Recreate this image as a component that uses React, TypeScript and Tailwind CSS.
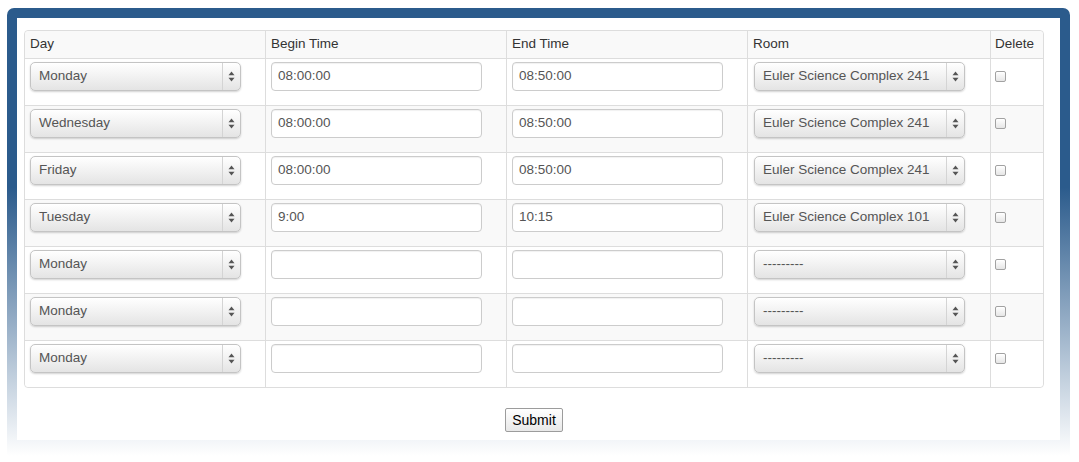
import React from "react";

type Row = { day: string; begin: string; end: string; room: string; gray: boolean };

const rows: Row[] = [
  { day: "Monday", begin: "08:00:00", end: "08:50:00", room: "Euler Science Complex 241", gray: false },
  { day: "Wednesday", begin: "08:00:00", end: "08:50:00", room: "Euler Science Complex 241", gray: true },
  { day: "Friday", begin: "08:00:00", end: "08:50:00", room: "Euler Science Complex 241", gray: false },
  { day: "Tuesday", begin: "9:00", end: "10:15", room: "Euler Science Complex 101", gray: true },
  { day: "Monday", begin: "", end: "", room: "---------", gray: false },
  { day: "Monday", begin: "", end: "", room: "---------", gray: true },
  { day: "Monday", begin: "", end: "", room: "---------", gray: false },
];

function Arrows() {
  return (
    <svg width="7" height="11" viewBox="0 0 7 11" className="block">
      <path d="M3.5 0.5 L6.5 4.2 L0.5 4.2 Z" fill="#555" />
      <path d="M3.5 10.5 L6.5 6.8 L0.5 6.8 Z" fill="#555" />
    </svg>
  );
}

function FakeSelect({ value }: { value: string }) {
  return (
    <div className="flex h-[29px] w-[211px] items-stretch rounded-[5px] border border-[#c4c4c4] bg-[linear-gradient(to_bottom,#ffffff_0%,#f3f3f3_45%,#e4e4e4_100%)] shadow-[0_1px_2px_rgba(0,0,0,0.18),inset_0_1px_0_#fff]">
      <div className="flex flex-1 items-center pl-[8px] text-[13.5px] text-[#555]">{value}</div>
      <div className="flex w-[18px] items-center justify-center border-l border-[#d4d4d4]">
        <Arrows />
      </div>
    </div>
  );
}

function FakeInput({ value }: { value: string }) {
  return (
    <div className="flex h-[29px] w-[211px] items-center rounded-[4px] border border-[#cccccc] bg-white pl-[6px] text-[13.5px] text-[#555] shadow-[inset_0_1px_1px_rgba(0,0,0,0.06)]">
      {value}
    </div>
  );
}

function Check() {
  return (
    <div className="h-[11px] w-[11px] rounded-[2px] border border-[#a2a2a2] bg-[linear-gradient(to_bottom,#ffffff,#e6e6e6)] shadow-[inset_0_1px_0_#fff]" />
  );
}

export default function App() {
  const font = { fontFamily: '"Liberation Sans", Arial, sans-serif' };
  return (
    <div className="h-[462px] w-[1079px] bg-white pl-[7px] pt-[8px]" style={font}>
      <div className="h-[448px] w-[1063px] rounded-t-[7px] bg-[linear-gradient(to_bottom,#2b5b8c_0%,#2b5b8c_40%,#ffffff_100%)] px-[10px] pt-[10px]">
        <div className="h-[422px] bg-white pl-[7px] pt-[12px]">
          <div className="flex w-[1020px] flex-col items-center">
            <div className="w-[1020px] rounded-[4px] border border-[#dddddd]">
              <div className="grid grid-cols-[240px_241px_241px_243px_53px] rounded-t-[4px] bg-[#f9f9f9] text-[13.5px] text-[#333]">
                <div className="flex h-[27px] items-center pl-[5px]">Day</div>
                <div className="flex h-[27px] items-center border-l border-[#dddddd] pl-[5px]">Begin Time</div>
                <div className="flex h-[27px] items-center border-l border-[#dddddd] pl-[5px]">End Time</div>
                <div className="flex h-[27px] items-center border-l border-[#dddddd] pl-[5px]">Room</div>
                <div className="flex h-[27px] items-center border-l border-[#dddddd] pl-[4px]">Delete</div>
              </div>
              {rows.map((r, i) => (
                <div
                  key={i}
                  className={
                    "grid grid-cols-[240px_241px_241px_243px_53px] border-t border-[#dddddd] " +
                    (r.gray ? "bg-[#f9f9f9]" : "bg-white") +
                    (i === rows.length - 1 ? " rounded-b-[4px]" : "")
                  }
                >
                  <div className="h-[46px] pl-[5px] pt-[3px]">
                    <FakeSelect value={r.day} />
                  </div>
                  <div className="h-[46px] border-l border-[#dddddd] pl-[5px] pt-[3px]">
                    <FakeInput value={r.begin} />
                  </div>
                  <div className="h-[46px] border-l border-[#dddddd] pl-[5px] pt-[3px]">
                    <FakeInput value={r.end} />
                  </div>
                  <div className="h-[46px] border-l border-[#dddddd] pl-[6px] pt-[3px]">
                    <FakeSelect value={r.room} />
                  </div>
                  <div className="h-[46px] border-l border-[#dddddd] pl-[4px] pt-[3px]">
                    <div className="flex h-[29px] items-center">
                      <Check />
                    </div>
                  </div>
                </div>
              ))}
            </div>
            <button className="mt-[20px] flex h-[24px] w-[58px] items-center justify-center rounded-[2px] border border-[#9c9c9c] bg-[linear-gradient(to_bottom,#ffffff,#e8e8e8)] text-[14px] text-black">
              Submit
            </button>
          </div>
        </div>
      </div>
    </div>
  );
}
